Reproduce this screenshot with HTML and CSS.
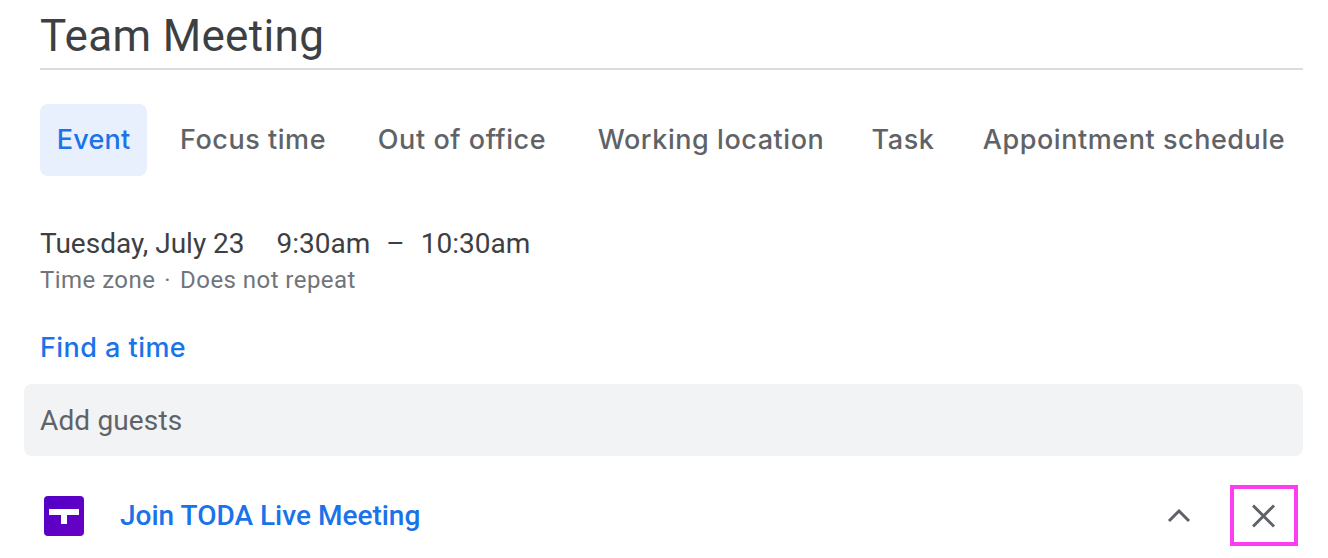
FILE: index.html
```html
<!DOCTYPE html>
<html lang="en">
<head>
<meta charset="utf-8">
<title>Team Meeting</title>
<link rel="stylesheet" href="styles.css">
</head>
<body>
<main class="page">
  <h1 class="title">Team Meeting</h1>
  <nav class="tabs">
    <span class="tab tab-active">Event</span>
    <span class="tab">Focus time</span>
    <span class="tab">Out of office</span>
    <span class="tab">Working location</span>
    <span class="tab">Task</span>
    <span class="tab">Appointment schedule</span>
  </nav>
  <div class="when">
    <span>Tuesday, July 23</span>
    <span class="times"><span>9:30am</span><span>–</span><span>10:30am</span></span>
  </div>
  <div class="meta">Time zone<span class="dot">·</span>Does not repeat</div>
  <a class="find">Find a time</a>
  <div class="guests">Add guests</div>
  <div class="conf">
    <svg class="logo" width="40" height="40" viewBox="0 0 40 40" aria-hidden="true">
      <defs><linearGradient id="g" x1="0" y1="0" x2="1" y2="1"><stop offset="0" stop-color="#5200c8"/><stop offset="1" stop-color="#6a00c4"/></linearGradient></defs>
      <rect width="40" height="40" rx="4" fill="url(#g)"/>
      <path d="M5 13h30v6H23v9h-6v-9H5z" fill="#fff"/>
    </svg>
    <a class="join">Join TODA Live Meeting</a>
    <svg class="chev" width="24" height="14" viewBox="0 0 24 14" aria-hidden="true"><path d="M2 12 12 2l10 10" fill="none" stroke="#5f6368" stroke-width="3"/></svg>
    <div class="close">
      <svg width="24" height="24" viewBox="0 0 24 24" aria-hidden="true"><path d="M1 1.500l21 21M22 1.500 1 22.500" fill="none" stroke="#5f6368" stroke-width="3"/></svg>
    </div>
  </div>
</main>
</body>
</html>
```
FILE: styles.css
```css
* { box-sizing: border-box; }
html, body { margin: 0; padding: 0; background: #fff; }
body { width: 1328px; height: 558px; overflow: hidden; font-family: Roboto, "Liberation Sans", sans-serif; }
.page { display: flex; flex-direction: column; padding-left: 24px; width: 1303px; }
.title { margin: 0 0 34px 16px; height: 70px; border-bottom: 2px solid #dadce0; font-weight: 400; font-size: 44px; line-height: 72px; letter-spacing: .35px; color: #3c4043; }
.tabs { display: grid; grid-template-columns: 107px 180px 206px 260px 92px 338px; margin-left: 16px; height: 72px; column-gap: 16px; }
.tab { display: flex; align-items: center; justify-content: center; padding-bottom: 2px; font-family: Inter, Roboto, sans-serif; font-size: 27px; font-weight: 500; letter-spacing: .55px; color: #5f6368; border-radius: 8px; white-space: nowrap; }
.tab-active { background: #e8f0fe; color: #1a73e8; letter-spacing: .2px; }
.when { margin: 48px 0 0 16px; display: flex; gap: 32px; font-size: 28px; line-height: 40px; color: #3c4043; }
.times { display: flex; gap: 16px; }
.meta { margin: 0 0 0 16px; font-size: 24px; line-height: 32px; letter-spacing: .45px; color: #70757a; }
.dot { margin: 0 9px; }
.find { margin: 32px 0 0 16px; font-family: Inter, Roboto, sans-serif; font-size: 27px; line-height: 40px; font-weight: 500; letter-spacing: .45px; color: #1a73e8; }
.guests { margin-top: 16px; height: 72px; padding-left: 16px; display: flex; align-items: center; background: #f1f3f4; border-radius: 8px; font-size: 28px; letter-spacing: .15px; color: #5f6368; }
.conf { display: flex; align-items: center; height: 90px; margin-top: 15px; padding-left: 20px; }
.logo { flex: none; }
.join { margin: 0 0 2px 36px; font-size: 28px; font-weight: 500; color: #1a73e8; flex: 1; }
.chev { margin-right: 39px; }
.close { width: 68px; height: 61px; border: 4px solid #ff3df0; display: flex; align-items: center; justify-content: center; margin: 0 5px 1px 0; }
```
